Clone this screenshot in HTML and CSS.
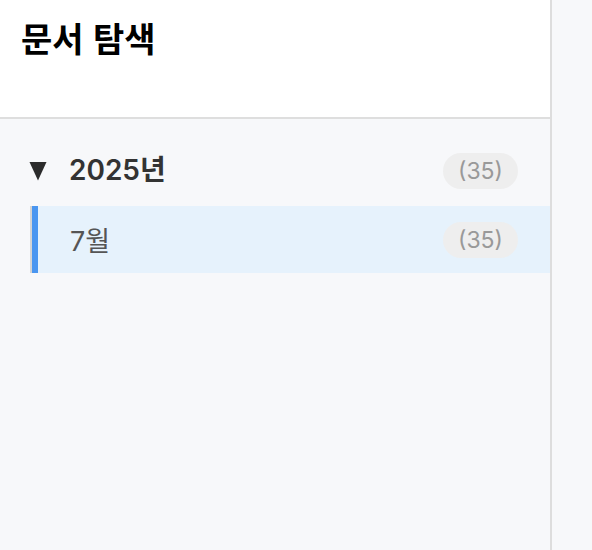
FILE: index.html
```html
<!DOCTYPE html>
<html lang="ko">
<head>
<meta charset="utf-8">
<link rel="stylesheet" href="styles.css">
</head>
<body>
<div class="app">
  <aside class="sidebar">
    <header class="sidebar-header">
      <h1 class="title">문서 탐색</h1>
    </header>
    <div class="tree">
      <div class="year-row">
        <svg class="caret" width="18" height="20" viewBox="0 0 18 20"><path d="M0.5 1 H17.5 L9 19.5 Z" fill="#2b2b2b"/></svg>
        <span class="year-label">2025년</span>
        <span class="badge">(35)</span>
      </div>
      <div class="months">
        <div class="month-row active">
          <span class="month-label">7월</span>
          <span class="badge">(35)</span>
        </div>
      </div>
    </div>
  </aside>
  <main class="main"></main>
</div>
</body>
</html>
```
FILE: styles.css
```css
* { box-sizing: border-box; }
html, body { margin: 0; padding: 0; height: 100%; }
body {
  font-family: Inter, "Noto Sans CJK KR", sans-serif;
  background: #f7f8fa;
}
.app { display: flex; height: 550px; }
.sidebar {
  width: 552px;
  flex: none;
  border-right: 2px solid #dddddd;
  background: #f7f8fa;
  display: flex;
  flex-direction: column;
}
.sidebar-header {
  height: 119px;
  background: #ffffff;
  border-bottom: 2px solid #dedede;
  padding: 16px 21px 0;
}
.title {
  margin: 0;
  font-family: "Noto Sans CJK KR", sans-serif;
  font-size: 34px;
  line-height: 44px;
  font-weight: 700;
  color: #000;
}
.tree { padding: 24px 0 0 30px; }
.year-row {
  display: flex;
  align-items: center;
  height: 56px;
  padding-right: 32px;
}
.caret { margin-left: -1px; margin-right: 22px; flex: none; }
.year-label {
  font-size: 28px;
  line-height: 36px;
  font-weight: 600;
  color: #333333;
  flex: 1;
  margin-top: -2px;
}
.badge {
  display: inline-flex;
  align-items: center;
  justify-content: center;
  width: 75px;
  height: 36px;
  border-radius: 18px;
  background: #eeeeee;
  color: #999999;
  font-size: 23px;
}
.months {
  margin-top: 7px;
  border-left: 2px solid #d4d4d4;
}
.month-row {
  display: flex;
  align-items: center;
  height: 67px;
  padding: 0 32px 0 32px;
  border-left: 6px solid #4a96f0;
  background: #e6f2fc;
}
.month-label {
  flex: 1;
  font-size: 27px;
  color: #555555;
}
.main { flex: 1; background: #f7f8fa; }
```
